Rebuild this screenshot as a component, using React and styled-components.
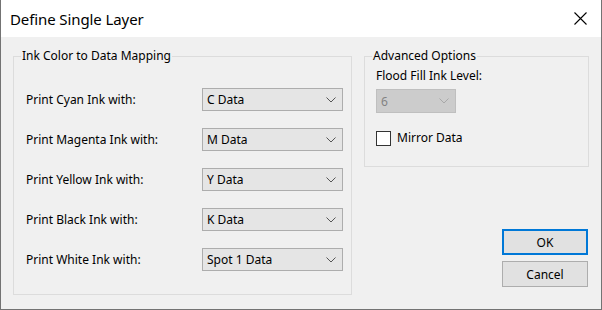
import React, { useState } from "react";
import styled, { createGlobalStyle } from "styled-components";

const GlobalStyle = createGlobalStyle`
  html, body {
    margin: 0;
    padding: 0;
    background: #f0f0f0;
  }
  * {
    box-sizing: border-box;
  }
`;

// Dialog frame
const Window = styled.div`
  width: 602px;
  height: 310px;
  display: flex;
  flex-direction: column;
  background: #f0f0f0;
  border: 1px solid #737373;
  border-top: none;
  font-family: "Noto Sans", "Liberation Sans", sans-serif;
  font-size: 12px;
  color: #000;
`;

const TitleBar = styled.div`
  height: 37px;
  flex: none;
  display: flex;
  align-items: center;
  justify-content: space-between;
  padding: 0 14px 0 9px;
  background: #fff;
`;

const Title = styled.span`
  font-size: 15px;
  letter-spacing: -0.1px;
`;

const CloseButton = styled.button`
  width: 14px;
  height: 14px;
  padding: 0;
  border: none;
  background: transparent;
  display: flex;
  align-items: center;
  justify-content: center;
`;

const Body = styled.div`
  flex: 1;
  display: flex;
  gap: 12px;
  padding: 11px 12px 0 12px;
`;

const GroupBox = styled.fieldset`
  margin: 0;
  width: ${({ $width }) => $width}px;
  height: ${({ $height }) => $height}px;
  padding: 0;
  border: 1px solid #dcdcdc;
  border-radius: 0;
  min-width: 0;
`;

const Legend = styled.legend`
  padding: 0 1px;
  margin-left: 7px;
  line-height: 16px;
  color: #000;
`;

const GroupContent = styled.div`
  display: flex;
  flex-direction: column;
  align-items: flex-start;
  padding: ${({ $padding }) => $padding};
`;

const MappingRows = styled.div`
  display: flex;
  flex-direction: column;
  gap: 17px;
`;

const Row = styled.div`
  display: flex;
  align-items: center;
`;

const RowLabel = styled.label`
  width: 176px;
  line-height: 16px;
`;

const Combo = styled.div`
  width: ${({ $width }) => $width}px;
  height: ${({ $height }) => $height}px;
  display: flex;
  align-items: center;
  justify-content: space-between;
  padding: 0 6px 0 4px;
  background: ${({ $disabled }) => ($disabled ? "#cccccc" : "#e5e5e5")};
  border: 1px solid ${({ $disabled }) => ($disabled ? "#bfbfbf" : "#adadad")};
  color: ${({ $disabled }) => ($disabled ? "#838383" : "#000")};
`;

const RightColumn = styled.div`
  flex: 1;
  display: flex;
  flex-direction: column;
  align-items: flex-end;
`;

const FieldLabel = styled.div`
  line-height: 16px;
  margin-bottom: 5px;
`;

const CheckRow = styled.label`
  display: flex;
  align-items: center;
  gap: 6px;
  margin-top: 17px;
  line-height: 16px;
  cursor: default;
`;

const CheckBox = styled.span`
  width: 15px;
  height: 15px;
  border: 1px solid #333;
  background: #fff;
  display: flex;
  align-items: center;
  justify-content: center;
`;

const Buttons = styled.div`
  margin-top: auto;
  margin-bottom: 22px;
  margin-right: 1px;
  display: flex;
  flex-direction: column;
  gap: 6px;
`;

const DialogButton = styled.button`
  width: 86px;
  height: 26px;
  padding: 0;
  font-family: inherit;
  font-size: 12px;
  color: #000;
  background: #e1e1e1;
  border: ${({ $default }) => ($default ? "2px solid #0078d7" : "1px solid #adadad")};
  border-radius: 0;
`;

const Chevron = ({ color = "#555" }) => (
  <svg width="10" height="6" viewBox="0 0 10 6">
    <path d="M0.5 0.5 L5 5 L9.5 0.5" fill="none" stroke={color} strokeWidth="1" />
  </svg>
);

const CloseIcon = () => (
  <svg width="13" height="13" viewBox="0 0 13 13">
    <path d="M0.5 0.5 L12.5 12.5 M12.5 0.5 L0.5 12.5" stroke="#000" strokeWidth="1.1" />
  </svg>
);

const mappings = [
  { ink: "Cyan", data: "C Data" },
  { ink: "Magenta", data: "M Data" },
  { ink: "Yellow", data: "Y Data" },
  { ink: "Black", data: "K Data" },
  { ink: "White", data: "Spot 1 Data" },
];

export default function App() {
  const [mirror, setMirror] = useState(false);

  return (
    <>
      <GlobalStyle />
      <Window>
        <TitleBar>
          <Title>Define Single Layer</Title>
          <CloseButton aria-label="Close">
            <CloseIcon />
          </CloseButton>
        </TitleBar>
        <Body>
          <GroupBox $width={340} $height={247}>
            <Legend>Ink Color to Data Mapping</Legend>
            <GroupContent $padding="24px 0 0 12px">
              <MappingRows>
                {mappings.map((m) => (
                  <Row key={m.ink}>
                    <RowLabel>Print {m.ink} Ink with:</RowLabel>
                    <Combo $width={141} $height={23}>
                      <span>{m.data}</span>
                      <Chevron />
                    </Combo>
                  </Row>
                ))}
              </MappingRows>
            </GroupContent>
          </GroupBox>
          <RightColumn>
            <GroupBox $width={225} $height={119}>
              <Legend>Advanced Options</Legend>
              <GroupContent $padding="4px 0 0 11px">
                <FieldLabel>Flood Fill Ink Level:</FieldLabel>
                <Combo $width={80} $height={24} $disabled>
                  <span>6</span>
                  <Chevron color="#a8a8a8" />
                </Combo>
                <CheckRow onClick={() => setMirror(!mirror)}>
                  <CheckBox>
                    {mirror && (
                      <svg width="11" height="9" viewBox="0 0 11 9">
                        <path d="M1 4.5 L4 7.5 L10 1" fill="none" stroke="#000" strokeWidth="1.4" />
                      </svg>
                    )}
                  </CheckBox>
                  Mirror Data
                </CheckRow>
              </GroupContent>
            </GroupBox>
            <Buttons>
              <DialogButton $default>OK</DialogButton>
              <DialogButton>Cancel</DialogButton>
            </Buttons>
          </RightColumn>
        </Body>
      </Window>
    </>
  );
}
